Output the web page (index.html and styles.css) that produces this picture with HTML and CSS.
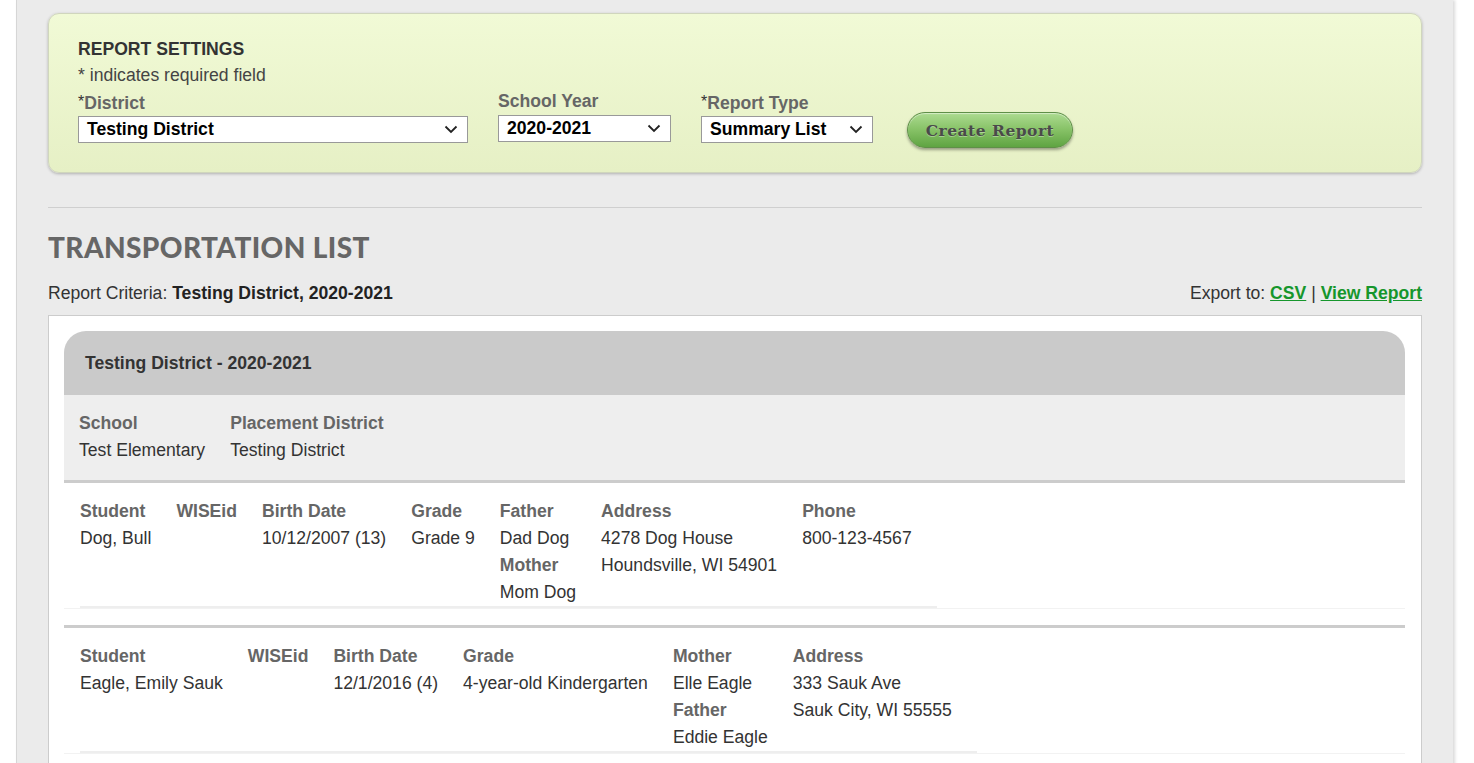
FILE: index.html
```html
<!DOCTYPE html>
<html lang="en">
<head>
    <meta charset="UTF-8">
    <meta name="viewport" content="width=device-width, initial-scale=1.0">
    <title>Transportation List</title>
    <link rel="stylesheet" href="styles.css">
</head>
<body>
    <div class="page">

        <div class="settings">
            <h2>REPORT SETTINGS</h2>
            <p class="note">* indicates required field</p>
            <div class="fields">
                <div class="field district">
                    <label><span class="req">*</span>District</label>
                    <div class="select">
                        <span>Testing District</span>
                        <svg width="14" height="9" viewBox="0 0 14 9"><path d="M1.5 1.5 L7 7 L12.5 1.5" fill="none" stroke="#222" stroke-width="1.8"/></svg>
                    </div>
                </div>
                <div class="field year">
                    <label>School Year</label>
                    <div class="select">
                        <span>2020-2021</span>
                        <svg width="14" height="9" viewBox="0 0 14 9"><path d="M1.5 1.5 L7 7 L12.5 1.5" fill="none" stroke="#222" stroke-width="1.8"/></svg>
                    </div>
                </div>
                <div class="field type">
                    <label><span class="req">*</span>Report Type</label>
                    <div class="select">
                        <span>Summary List</span>
                        <svg width="14" height="9" viewBox="0 0 14 9"><path d="M1.5 1.5 L7 7 L12.5 1.5" fill="none" stroke="#222" stroke-width="1.8"/></svg>
                    </div>
                </div>
                <button class="create">Create Report</button>
            </div>
        </div>

        <hr class="divider">

        <h1>TRANSPORTATION LIST</h1>

        <div class="criteria-bar">
            <p>Report Criteria: <b>Testing District, 2020-2021</b></p>
            <p>Export to: <a href="#">CSV</a> | <a href="#">View Report</a></p>
        </div>

        <div class="report">
            <div class="group">
                <div class="group-head">Testing District - 2020-2021</div>

                <div class="school">
                    <table>
                        <tr><th>School</th><th>Placement District</th></tr>
                        <tr><td>Test Elementary</td><td>Testing District</td></tr>
                    </table>
                </div>

                <div class="student">
                    <table>
                        <tr>
                            <td><b>Student</b><br>Dog, Bull</td>
                            <td><b>WISEid</b><br></td>
                            <td><b>Birth Date</b><br>10/12/2007 (13)</td>
                            <td><b>Grade</b><br>Grade 9</td>
                            <td><b>Father</b><br>Dad Dog<br><b>Mother</b><br>Mom Dog</td>
                            <td><b>Address</b><br>4278 Dog House<br>Houndsville, WI 54901</td>
                            <td><b>Phone</b><br>800-123-4567</td>
                        </tr>
                    </table>
                </div>

                <div class="student">
                    <table>
                        <tr>
                            <td><b>Student</b><br>Eagle, Emily Sauk</td>
                            <td><b>WISEid</b><br></td>
                            <td><b>Birth Date</b><br>12/1/2016 (4)</td>
                            <td><b>Grade</b><br>4-year-old Kindergarten</td>
                            <td><b>Mother</b><br>Elle Eagle<br><b>Father</b><br>Eddie Eagle</td>
                            <td><b>Address</b><br>333 Sauk Ave<br>Sauk City, WI 55555</td>
                        </tr>
                    </table>
                </div>
            </div>
        </div>

    </div>
</body>
</html>
```

FILE: styles.css
```css
body {
    margin: 0;
    background: #fff;
    font-family: "Liberation Sans", Arial, sans-serif;
    font-size: 17.6px;
    color: #333;
}

.page {
    width: 1374px;
    margin-left: 16px;
    padding: 13px 31px 0 31px;
    min-height: 800px;
    background: #ebebeb;
    border-left: 1px solid #d6d6d6;
    box-shadow: 2px 0 3px rgba(0, 0, 0, 0.15);
}

/* report settings panel */
.settings {
    background: linear-gradient(#f1fad6, #e6f0c5);
    border: 1px solid #d0d6bd;
    border-radius: 11px;
    box-shadow: 0 1px 3px rgba(0, 0, 0, 0.25);
    padding: 25px 29px 29px 29px;
}

.settings h2 {
    margin: 0;
    font-size: 17.6px;
    line-height: 21px;
    color: #333;
}

.note {
    margin: 5px 0 0 0;
    line-height: 21px;
    color: #444;
}

.fields {
    display: flex;
    align-items: flex-end;
    gap: 30px;
}

.field label {
    display: block;
    font-weight: bold;
    color: #666;
    line-height: 22px;
    margin: 4px 0 2px 0;
}

.field.year label {
    margin-bottom: 3px;
}

.req {
    color: #333;
    font-weight: normal;
    font-size: 16px;
    vertical-align: 2px;
}

.select {
    display: flex;
    justify-content: space-between;
    align-items: center;
    box-sizing: border-box;
    height: 27px;
    padding: 0 9px 0 8px;
    background: #fff;
    border: 1px solid #999;
    font-weight: bold;
    color: #000;
}

.field.year .select {
    margin-bottom: 1px;
}

.district .select { width: 390px; }
.year .select { width: 173px; }
.type .select { width: 172px; }

.create {
    margin-left: 4px;
    margin-bottom: -5px;
    width: 166px;
    height: 36px;
    border: 1px solid #5f8f48;
    border-radius: 18px;
    background: linear-gradient(#acdb90, #86c166 50%, #5fa442);
    box-shadow: 0 2px 3px rgba(0, 0, 0, 0.35), inset 0 1px 1px rgba(255, 255, 255, 0.5);
    font-family: "DejaVu Serif", Georgia, serif;
    font-weight: bold;
    font-size: 15.5px;
    letter-spacing: 0.5px;
    color: #4a4a4a;
    text-shadow: 0 1px 0 rgba(255, 255, 255, 0.35);
    cursor: pointer;
}

.divider {
    margin: 34px 0 0 0;
    border: none;
    border-top: 1px solid #cfcfcf;
}

h1 {
    margin: 23px 0 0 0;
    font-family: Lato, "Liberation Sans", sans-serif;
    font-weight: 900;
    font-size: 28px;
    letter-spacing: 0.4px;
    line-height: 32px;
    color: #666;
}

.criteria-bar {
    display: flex;
    justify-content: space-between;
    margin-top: 20px;
    line-height: 21px;
}

.criteria-bar p {
    margin: 0;
}

.criteria-bar b {
    color: #222;
}

.criteria-bar a {
    color: #16962c;
    font-weight: bold;
}

/* report body */
.report {
    margin-top: 11px;
    background: #fff;
    border: 1px solid #ccc;
    padding: 15px 16px 15px 15px;
}

.group-head {
    height: 64px;
    line-height: 64px;
    padding-left: 21px;
    background: #cacaca;
    border-radius: 22px 22px 0 0;
    font-weight: bold;
    color: #333;
}

.school {
    background: #eee;
    padding: 15px 15px 16px 15px;
    border-bottom: 3px solid #ccc;
}

table {
    border-collapse: collapse;
}

th, td {
    text-align: left;
    vertical-align: top;
    padding: 0 25px 0 0;
    line-height: 27px;
}

.school th {
    padding-right: 24px;
}

th, td b {
    color: #666;
}

.student {
    padding: 15px 0 0 0;
    border-bottom: 1px solid #f2f2f2;
}

.student + .student {
    margin-top: 16px;
    border-top: 3px solid #ccc;
}

.student table {
    margin-left: 16px;
    border-bottom: 2px solid #eee;
}
```
